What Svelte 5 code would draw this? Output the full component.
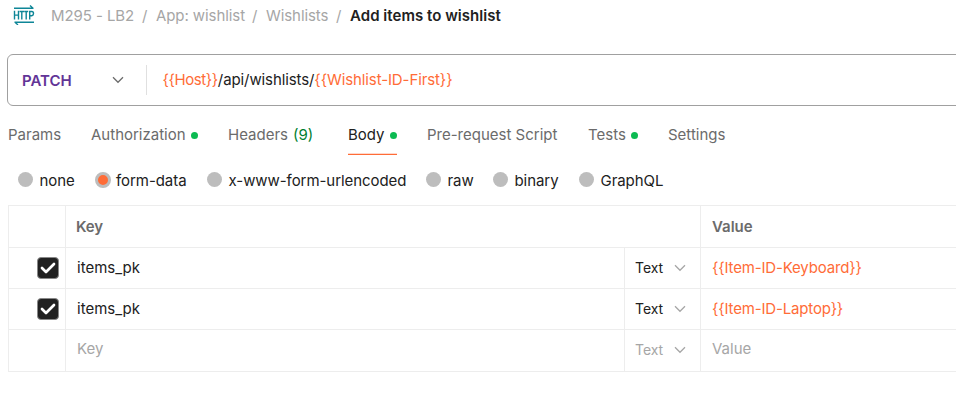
<script>
  const crumbs = [
    { label: 'M295 - LB2', w: 92 },
    { label: 'App: wishlist', w: 97 },
    { label: 'Wishlists', w: 71 },
  ];
  const tabs = [
    { label: 'Params', w: 83 },
    { label: 'Authorization', w: 137, dot: true },
    { label: 'Headers', w: 120, count: '(9)' },
    { label: 'Body', w: 79, dot: true, active: true },
    { label: 'Pre-request Script', w: 161 },
    { label: 'Tests', w: 80, dot: true },
    { label: 'Settings', w: 80 },
  ];
  const modes = [
    { label: 'none', w: 77 },
    { label: 'form-data', w: 112, on: true },
    { label: 'x-www-form-urlencoded', w: 219 },
    { label: 'raw', w: 67 },
    { label: 'binary', w: 86 },
    { label: 'GraphQL', w: 100 },
  ];
  const rows = [
    { key: 'items_pk', value: '{{Item-ID-Keyboard}}' },
    { key: 'items_pk', value: '{{Item-ID-Laptop}}' },
    { key: 'Key', value: 'Value', empty: true },
  ];
</script>

{#snippet chevron(color)}
  <svg class="chevron" width="12" height="8" viewBox="0 0 12 8" fill="none">
    <path d="M1 1.2 6 6.3 11 1.2" stroke={color} stroke-width="1.25" />
  </svg>
{/snippet}

<main>
  <nav class="crumbs">
    <svg class="http" width="22" height="20" viewBox="0 0 22 20" fill="none" stroke="#0e8697" stroke-width="1.4">
      <path d="M1 3.2H20.5M17 .5 20 3.2M1.5 17.2H21M2 17.2 5 19.9" />
      <path d="M1.5 5.8V14.6M5.5 5.8V14.6M1.5 10.1H5.5M6.6 6.5H11M8.8 6.5V14.6M11.2 6.5H15.2M13.2 6.5V14.6M16.7 14.6V6.5H18.8Q20.5 6.5 20.5 8.4T18.8 10.7H16.7" />
    </svg>
    {#each crumbs as c}
      <span class="crumb" style:width="{c.w}px">{c.label}</span>
      <span class="slash">/</span>
    {/each}
    <strong>Add items to wishlist</strong>
  </nav>

  <div class="request">
    <div class="method"><b>PATCH</b>{@render chevron('#6b6b6b')}</div>
    <div class="url"><span class="var host">{'{{Host}}'}</span>/api/wishlists/<span class="var">{'{{Wishlist-ID-First}}'}</span></div>
  </div>

  <div class="tabs">
    {#each tabs as t}
      <div class="slot" style:width="{t.w}px">
        <div class="tab" class:active={t.active}>
          <span>{t.label}</span>
          {#if t.count}<span class="count">{t.count}</span>{/if}
          {#if t.dot}<i class="dot"></i>{/if}
        </div>
      </div>
    {/each}
  </div>

  <div class="modes">
    {#each modes as m}
      <div class="mode" style:width="{m.w}px"><i class="radio" class:on={m.on}></i><span>{m.label}</span></div>
    {/each}
  </div>

  <div class="table">
    <div class="row head">
      <div class="check"></div>
      <div class="key">Key</div>
      <div class="value">Value</div>
    </div>
    {#each rows as r}
      <div class="row" class:empty={r.empty}>
        <div class="check">
          {#if !r.empty}
            <span class="box"><svg width="16" height="12" viewBox="0 0 16 12" fill="none"><path d="M2 6 6 10 14 2" stroke="#fff" stroke-width="2.7" stroke-linecap="round" stroke-linejoin="round" /></svg></span>
          {/if}
        </div>
        <div class="key">{r.key}</div>
        <div class="type"><span>Text</span>{@render chevron('#a6a6a6')}</div>
        <div class="value">{r.value}</div>
      </div>
    {/each}
  </div>
</main>

<style>
  :global(body) { background: #fff; overflow: hidden; }
  main {
    box-sizing: border-box;
    width: 956px;
    height: 406px;
    overflow: hidden;
    background: #fff;
    font: 400 15px/20px Inter, "Liberation Sans", sans-serif;
    color: #212121;
    white-space: nowrap;
  }
  svg { display: block; flex: none; }
  .crumbs { display: flex; align-items: center; height: 32px; padding-left: 13px; color: #a6a6a6; letter-spacing: -.08px; }
  .http { margin: -2px 16px 0 0; }
  .crumb { flex: none; }
  .slash { flex: none; width: 13px; margin-left: -1px; margin-right: 1px; }
  strong { font-weight: 600; color: #212121; letter-spacing: .04px; }
  .request {
    display: flex;
    align-items: center;
    box-sizing: border-box;
    height: 52px;
    margin: 22px -10px 0 7px;
    border: 1px solid #a0a0a0;
    border-radius: 6px;
  }
  .method {
    display: flex;
    align-items: center;
    justify-content: space-between;
    box-sizing: border-box;
    width: 139px;
    height: 30px;
    padding: 0 22px 0 14px;
    border-right: 1px solid #e0e0e0;
  }
  .method b { margin-top: 1px; font-weight: 600; color: #623497; }
  .url { padding-left: 15.5px; letter-spacing: -.1px; }
  .var { color: #ff6c37; }
  .host { letter-spacing: -.4px; }
  .tabs { display: flex; height: 49px; padding-left: 8px; color: #6b6b6b; }
  .slot { flex: none; }
  .tab { display: inline-flex; align-items: center; box-sizing: border-box; height: 49px; padding-top: 10px; border-bottom: 1px solid transparent; }
  .active { color: #212121; border-color: #ff6c37; box-shadow: inset 0 -1px 0 #ffd9cc; }
  .count { margin-left: 5px; color: #007f31; }
  .dot { width: 7px; height: 7px; margin-left: 5.5px; border-radius: 50%; background: #0cbb52; }
  .modes { display: flex; align-items: center; height: 50px; padding-left: 18px; letter-spacing: -.06px; }
  .mode { display: flex; align-items: center; flex: none; }
  .mode span { margin-top: 2px; margin-left: -.5px; }
  .radio { box-sizing: border-box; width: 15px; height: 15px; margin: -1px 7px 0 0; border-radius: 50%; background: #bdbdbd; }
  .on { width: 16px; height: 16px; margin: 0 5.5px 0 0; border: 3px solid #bdbdbd; background: #ff6c37; }
  .table { margin-left: 8px; border: solid #ededed; border-width: 1px 0 0 1px; }
  .row { display: flex; box-sizing: border-box; height: 41px; border-bottom: 1px solid #ededed; line-height: 40px; }
  .head { height: 42px; font-weight: 600; color: #6b6b6b; line-height: 42px; }
  .check { display: flex; align-items: center; justify-content: flex-end; box-sizing: border-box; width: 57px; padding-right: 6px; border-right: 1px solid #ededed; }
  .key { box-sizing: border-box; width: 559px; padding-left: 11px; border-right: 1px solid #ededed; }
  .head .key { width: 635px; padding-left: 10px; letter-spacing: -.1px; }
  .type { display: flex; align-items: center; box-sizing: border-box; width: 76px; padding-left: 10px; font-size: 14px; letter-spacing: -.05px; border-right: 1px solid #ededed; }
  .type svg { margin-left: 11px; }
  .value { padding-left: 11px; letter-spacing: -.16px; color: #ff6c37; }
  .head .value { letter-spacing: 0; color: #6b6b6b; }
  .empty { height: 42px; color: #a6a6a6; line-height: 37px; }
  .empty .value { letter-spacing: 0; color: #a6a6a6; }
  .empty .type { padding-bottom: 2px; }
  .box { display: flex; align-items: center; justify-content: center; box-sizing: border-box; width: 22px; height: 22px; border: 1px solid #888; border-radius: 4px; background: #212121; }
</style>
